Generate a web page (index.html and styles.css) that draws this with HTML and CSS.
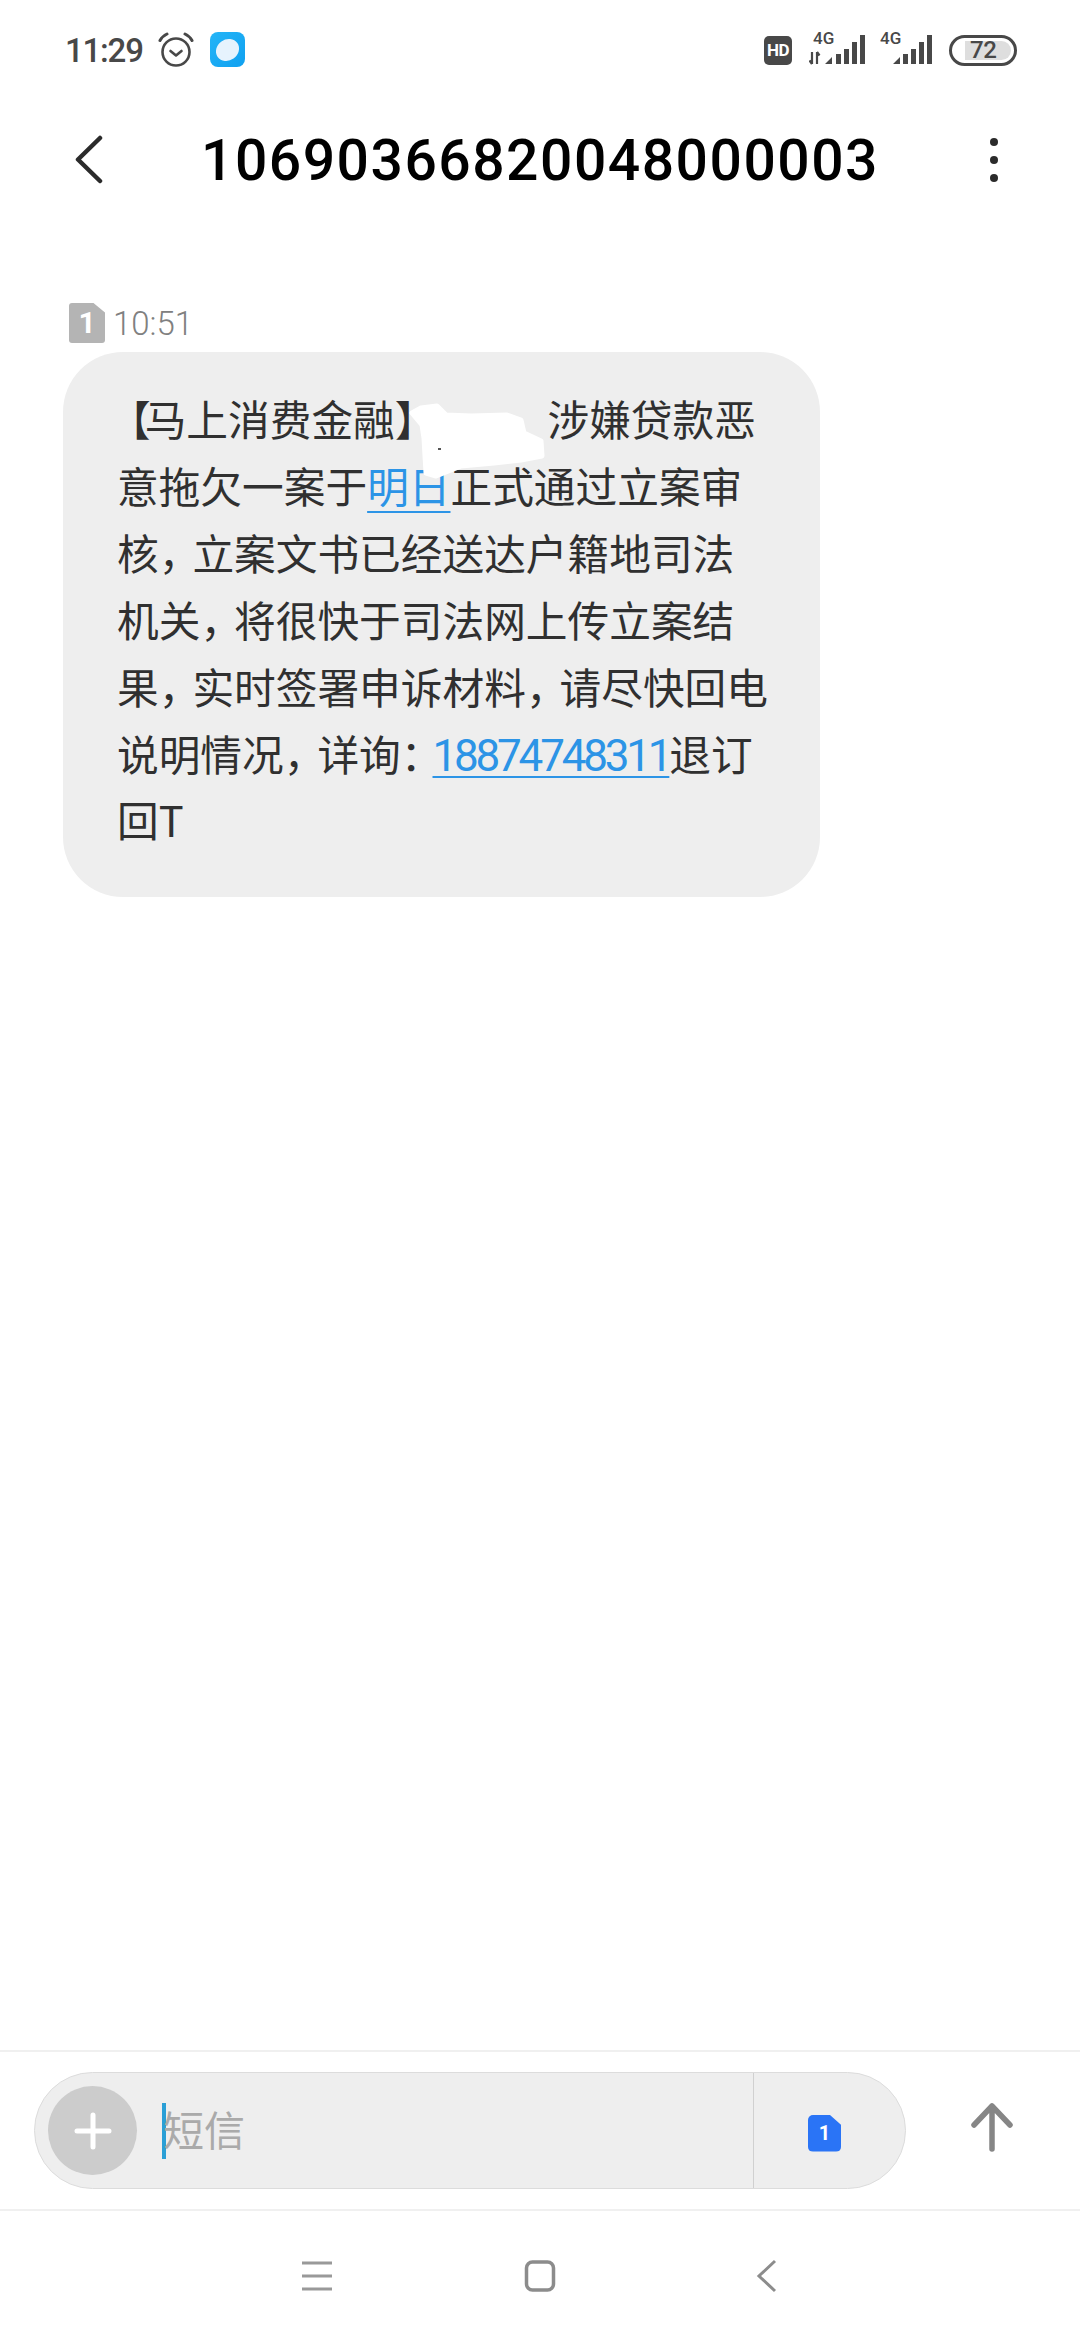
FILE: index.html
```html
<!DOCTYPE html>
<html lang="zh-CN">
<head>
    <meta charset="UTF-8">
    <meta name="viewport" content="width=device-width, initial-scale=1.0">
    <title>10690366820048000003</title>
    <link rel="stylesheet" href="styles.css">
</head>
<body>
    <div class="status-bar">
        <span class="clock">11:29</span>
        <svg class="alarm" width="36" height="36" viewBox="0 0 36 36" fill="none" stroke="#484848" stroke-linecap="round">
            <circle cx="18" cy="20" r="13.5" stroke-width="2.6"/>
            <path d="M12.5 19l5.5 4.5 5.5-4.5" stroke-width="2.6" stroke-linejoin="round"/>
            <path d="M2 8.5Q4.5 4 9 2M34 8.5Q31.500 4 27 2" stroke-width="3"/>
        </svg>
        <svg class="app-icon" width="35" height="35" viewBox="0 0 35 35">
            <defs>
                <linearGradient id="appBg" x1="0" y1="0" x2="1" y2="1">
                    <stop offset="0" stop-color="#25b5f7"/>
                    <stop offset="1" stop-color="#0fa0f0"/>
                </linearGradient>
            </defs>
            <rect width="35" height="35" rx="8" fill="url(#appBg)"/>
            <ellipse cx="17.500" cy="18" rx="12" ry="10.500" transform="rotate(-35 17.500 18)" fill="#e6f3fd"/>
        </svg>
        <div class="status-right">
            <span class="hd">HD</span>
            <svg class="signal" width="58" height="38" viewBox="0 -6 58 38">
                <text class="net-label" x="4" y="10">4G</text>
                <path d="M3 18v12M3 30l-2.500-3.500M8 30V18M8 18l2.500 3.500" fill="none" stroke="#484848" stroke-width="2.200"/>
                <path d="M16 30l7-7v7zM27 20h5v10h-5zM35 15h5v15h-5zM43 8h5v22h-5zM51 1h5v29h-5z" fill="#484848"/>
            </svg>
            <svg class="signal signal-b" width="53" height="38" viewBox="0 -6 53 38">
                <text class="net-label" x="0" y="10">4G</text>
                <path d="M13 30l7-7v7zM23 20h5v10h-5zM31 15h5v15h-5zM39 8h5v22h-5zM47 1h5v29h-5z" fill="#484848"/>
            </svg>
            <div class="battery"><span>72</span></div>
        </div>
    </div>

    <div class="title-bar">
        <svg class="back" width="30" height="50" viewBox="0 0 30 50" fill="none" stroke="#2b2b2b" stroke-width="4.500" stroke-linecap="round" stroke-linejoin="round">
            <path d="M26 3L4 24.500 26 46"/>
        </svg>
        <h1>10690366820048000003</h1>
        <div class="more"><i></i><i></i><i></i></div>
    </div>

    <main class="thread">
        <div class="msg-meta">
            <span class="sim-tag">1</span>
            <span class="msg-time">10:51</span>
        </div>
        <div class="bubble">
            <span class="tight-l">【</span>马上消费金融<span class="tight-r">】</span><span class="redact"><svg width="140" height="80" viewBox="0 0 140 80"><path d="M4 11L13 6 29 4 38 13 63 14 99 13 113 18 116 31 133 39 134 54 113 58 86 61 53 64 28 74 18 71 16 36 14 23Z" fill="#fff" stroke="#fff" stroke-width="5" stroke-linejoin="round"/><rect x="30" y="46" width="3" height="2" fill="#555"/></svg></span>涉嫌贷款恶<br>
            意拖欠一案于<a>明日</a>正式通过立案审<br>
            核<span class="punct">，</span>立案文书已经送达户籍地司法<br>
            机关<span class="punct">，</span>将很快于司法网上传立案结<br>
            果<span class="punct">，</span>实时签署申诉材料<span class="punct">，</span>请尽快回电<br>
            说明情况<span class="punct">，</span>详询<span class="punct wide">：</span><a class="num">18874748311</a>退订<br>
            回T
        </div>
    </main>

    <div class="composer">
        <div class="pill">
            <div class="add">
                <svg width="38" height="38" viewBox="0 0 38 38" stroke="#fff" stroke-width="5" stroke-linecap="round"><path d="M19 3v32M3 19h32"/></svg>
            </div>
            <div class="field"><i class="caret"></i><span class="placeholder">短信</span></div>
            <div class="sim-pick">
                <span class="sim-blue">1</span>
            </div>
        </div>
        <div class="send">
            <svg width="42" height="50" viewBox="0 0 42 50" fill="none" stroke="#868686" stroke-width="5.500" stroke-linecap="round" stroke-linejoin="round">
                <path d="M21 47V4M3 23L21 4l18 19"/>
            </svg>
        </div>
    </div>

    <div class="nav-bar">
        <div class="nav-btn">
            <svg width="60" height="40" viewBox="0 0 60 40" stroke="#999" stroke-width="3"><path d="M18 7h30M18 20h30M18 33h30"/></svg>
        </div>
        <div class="nav-btn">
            <svg width="60" height="40" viewBox="0 0 60 40" fill="none" stroke="#8c8c8c" stroke-width="3.500"><rect x="16.500" y="6" width="27" height="28" rx="6"/></svg>
        </div>
        <div class="nav-btn">
            <svg width="60" height="40" viewBox="0 0 60 40" fill="none" stroke="#8c8c8c" stroke-width="3"><path d="M39 5L23 20 39 35"/></svg>
        </div>
    </div>
</body>
</html>
```

FILE: styles.css
```css
* {
    box-sizing: border-box;
}
body {
    margin: 0;
    width: 1080px;
    height: 2340px;
    display: flex;
    flex-direction: column;
    background: #ffffff;
    font-family: Roboto, "Noto Sans CJK SC", sans-serif;
    overflow: hidden;
}

/* status bar */
.status-bar {
    height: 100px;
    display: flex;
    align-items: center;
    padding: 0 63px 0 65px;
    color: #484848;
}
.clock {
    font-size: 33px;
    font-weight: 500;
    letter-spacing: -1.200px;
    width: 77px;
}
.alarm {
    margin-left: 16px;
    margin-top: -1px;
}
.app-icon {
    margin-left: 16px;
    margin-top: -2px;
}
.status-right {
    margin-left: auto;
    display: flex;
    align-items: center;
}
.hd {
    width: 28px;
    height: 29px;
    border-radius: 5px;
    background: #484848;
    color: #fff;
    font-size: 17px;
    font-weight: 700;
    line-height: 29px;
    text-align: center;
    letter-spacing: -0.5px;
}
.signal {
    margin-left: 17px;
    margin-top: -6px;
}
.signal-b {
    margin-left: 13px;
}
.net-label {
    font-family: Roboto, sans-serif;
    font-size: 17px;
    font-weight: 500;
    fill: #484848;
}
.battery {
    margin-left: 16px;
    width: 68px;
    height: 31px;
    padding: 3px;
    border: 3px solid #484848;
    border-radius: 16px;
    display: flex;
    justify-content: flex-end;
}
.battery span {
    width: 46px;
    border-radius: 0 10px 10px 0;
    background: #dedede;
    font-size: 24px;
    font-weight: 500;
    line-height: 19px;
    text-align: left;
    padding-left: 5px;
    letter-spacing: -0.3px;
}

/* title */
.title-bar {
    height: 120px;
    display: grid;
    grid-template-columns: 1fr auto 1fr;
    align-items: center;
}
.back {
    margin-left: 74px;
}
.title-bar h1 {
    margin: 0;
    font-size: 57px;
    font-weight: 500;
    letter-spacing: 1.500px;
    color: #000000;
}
.more {
    justify-self: end;
    margin-right: 82px;
    display: flex;
    flex-direction: column;
    gap: 10px;
}
.more i {
    width: 8px;
    height: 8px;
    border-radius: 50%;
    background: #2b2b2b;
}

/* message */
.thread {
    flex: 1;
    padding: 83px 0 0 63px;
}
.msg-meta {
    display: flex;
    align-items: center;
    height: 40px;
    padding-left: 6px;
    margin-bottom: 9px;
}
.sim-tag {
    width: 36px;
    height: 40px;
    background: #b4b4b4;
    border-radius: 3px;
    clip-path: polygon(0 0, 68% 0, 100% 24%, 100% 100%, 0 100%);
    color: #fff;
    font-size: 30px;
    font-weight: 700;
    line-height: 40px;
    text-align: center;
}
.msg-time {
    margin-left: 8px;
    font-size: 33px;
    font-weight: 300;
    color: #808080;
}
.bubble {
    width: 757px;
    height: 545px;
    padding: 33px 0 0 54px;
    background: #eeeeee;
    border-radius: 60px;
    font-family: "Noto Sans CJK SC", sans-serif;
    font-size: 41.700px;
    line-height: 66.900px;
    color: #303030;
    white-space: nowrap;
}
.bubble a {
    color: #2c94e6;
    text-decoration: underline;
    text-decoration-thickness: 2px;
    text-decoration-skip-ink: none;
    text-underline-offset: 8px;
}
.bubble a.num {
    font-family: Roboto, sans-serif;
    font-size: 44px;
    line-height: 1;
    letter-spacing: -3.200px;
    text-underline-offset: 5px;
}
.tight-l {
    margin-left: -8px;
    letter-spacing: -6px;
}
.tight-r {
    letter-spacing: -26px;
}
.punct {
    letter-spacing: -8px;
}
.punct.wide {
    letter-spacing: -10px;
}
.redact {
    position: relative;
    display: inline-block;
    width: 137px;
    height: 1px;
}
.redact svg {
    position: absolute;
    left: -3px;
    top: -33px;
}

/* bottom input */
.composer {
    height: 161px;
    border-top: 2px solid #f0f0f0;
    border-bottom: 2px solid #f0f0f0;
    padding-left: 34px;
    display: flex;
    align-items: center;
}
.pill {
    width: 872px;
    height: 117px;
    display: flex;
    align-items: center;
    background: #eeeeee;
    border: 1px solid #dcdcdc;
    border-radius: 59px;
}
.add {
    width: 89px;
    height: 89px;
    margin-left: 13px;
    border-radius: 50%;
    background: #cccccc;
    display: flex;
    align-items: center;
    justify-content: center;
}
.field {
    flex: 1;
    display: flex;
    align-items: center;
    padding-left: 25px;
}
.caret {
    width: 4px;
    height: 56px;
    background: #2a9fd6;
    margin-right: -3px;
}
.placeholder {
    font-family: "Noto Sans CJK SC", sans-serif;
    font-size: 41px;
    line-height: 50px;
    margin-top: -6px;
    color: #aaaaaa;
}
.sim-pick {
    width: 152px;
    height: 100%;
    border-left: 1px solid #d0d0d0;
    display: flex;
    align-items: center;
    padding: 5px 0 0 54px;
}
.sim-blue {
    width: 33px;
    height: 37px;
    background: #2a74f6;
    border-radius: 5px;
    clip-path: polygon(0 0, 65% 0, 100% 28%, 100% 100%, 0 100%);
    color: #fff;
    font-size: 20px;
    font-weight: 700;
    line-height: 37px;
    text-align: center;
}
.send {
    flex: 1;
    display: flex;
    justify-content: center;
    padding: 0 2px 8px 0;
}

/* navigation */
.nav-bar {
    height: 129px;
    display: flex;
    justify-content: center;
    align-items: center;
}
.nav-btn {
    width: 226px;
    display: flex;
    justify-content: center;
}
```
